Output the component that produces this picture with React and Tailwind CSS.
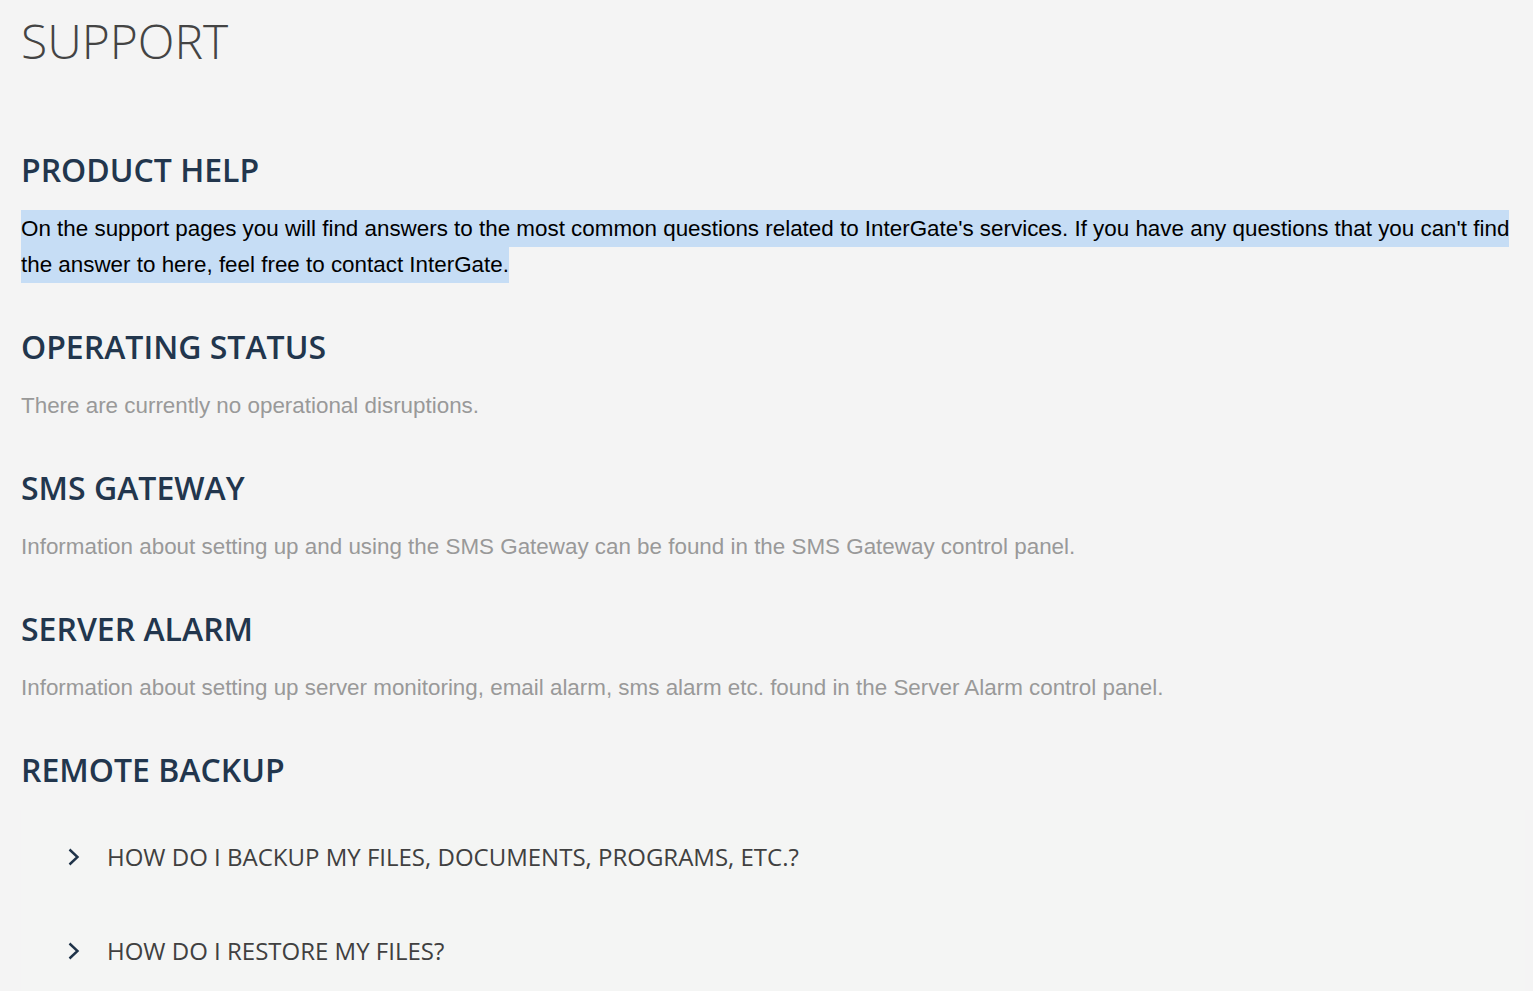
import React from "react";

const sections = [
  {
    title: "OPERATING STATUS",
    text: "There are currently no operational disruptions.",
  },
  {
    title: "SMS GATEWAY",
    text: "Information about setting up and using the SMS Gateway can be found in the SMS Gateway control panel.",
  },
  {
    title: "SERVER ALARM",
    text: "Information about setting up server monitoring, email alarm, sms alarm etc. found in the Server Alarm control panel.",
  },
];

const questions = [
  "HOW DO I BACKUP MY FILES, DOCUMENTS, PROGRAMS, ETC.?",
  "HOW DO I RESTORE MY FILES?",
];

function Chevron() {
  return (
    <svg width="14" height="18" viewBox="0 0 14 18" fill="none" className="shrink-0">
      <path d="M2.5 1.5 L10.5 9 L2.5 16.5" stroke="#1f3349" strokeWidth="2.4" />
    </svg>
  );
}

function Heading({ children }) {
  return (
    <h2 className="font-['Open_Sans',sans-serif] text-[32px] leading-[40px] font-semibold text-[#22364d]">
      {children}
    </h2>
  );
}

export default function App() {
  return (
    <div className="min-h-screen bg-[#f4f4f4] pt-[17px] pl-[21px] pr-[8px] overflow-hidden">
      <h1 className="font-['Open_Sans',sans-serif] text-[48px] leading-[48px] font-light text-[#444]">
        SUPPORT
      </h1>

      <div className="mt-[85px]">
        <Heading>PRODUCT HELP</Heading>
        <p className="mt-[21px] mb-[44px] font-['Liberation_Sans',Arial,sans-serif] text-[22.4px] leading-[36px] text-black">
          <span className="bg-[#c6ddf5] py-[5.6px] box-decoration-clone">
            On the support pages you will find answers to the most common questions related to InterGate's services. If you have any questions that you can't find the answer to here, feel free to contact InterGate.
          </span>
        </p>
      </div>

      {sections.map((s) => (
        <div key={s.title}>
          <Heading>{s.title}</Heading>
          <p className="mt-[21px] mb-[44px] font-['Liberation_Sans',Arial,sans-serif] text-[22.4px] leading-[36px] text-[#999]">
            {s.text}
          </p>
        </div>
      ))}

      <Heading>REMOTE BACKUP</Heading>
      <div className="mt-[20px] bg-[#f4f5f4]">
        {questions.map((q) => (
          <div key={q} className="h-[94px] flex items-center pl-[46px] gap-[26px]">
            <Chevron />
            <span className="font-['Open_Sans',sans-serif] text-[24px] text-[#404040]">{q}</span>
          </div>
        ))}
      </div>
    </div>
  );
}
